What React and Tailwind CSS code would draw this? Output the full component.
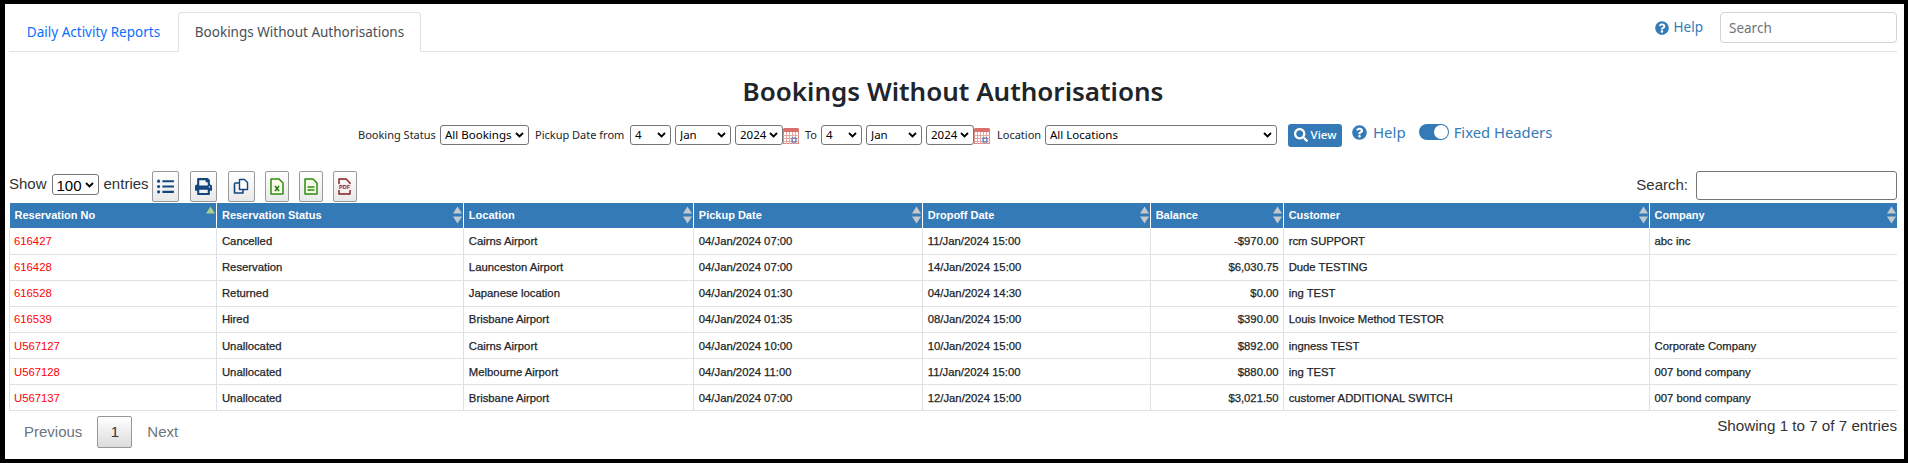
import { FaListUl, FaPrint, FaQuestionCircle, FaSearch } from 'react-icons/fa';

const COLUMNS = [
  { label: 'Reservation No', width: 207 },
  { label: 'Reservation Status', width: 247 },
  { label: 'Location', width: 230 },
  { label: 'Pickup Date', width: 229 },
  { label: 'Dropoff Date', width: 228 },
  { label: 'Balance', width: 133 },
  { label: 'Customer', width: 366 },
  { label: 'Company', width: 248 },
];

const ROWS = [
  ['616427', 'Cancelled', 'Cairns Airport', '04/Jan/2024 07:00', '11/Jan/2024 15:00', '-$970.00', 'rcm SUPPORT', 'abc inc'],
  ['616428', 'Reservation', 'Launceston Airport', '04/Jan/2024 07:00', '14/Jan/2024 15:00', '$6,030.75', 'Dude TESTING', ''],
  ['616528', 'Returned', 'Japanese location', '04/Jan/2024 01:30', '04/Jan/2024 14:30', '$0.00', 'ing TEST', ''],
  ['616539', 'Hired', 'Brisbane Airport', '04/Jan/2024 01:35', '08/Jan/2024 15:00', '$390.00', 'Louis Invoice Method TESTOR', ''],
  ['U567127', 'Unallocated', 'Cairns Airport', '04/Jan/2024 10:00', '10/Jan/2024 15:00', '$892.00', 'ingness TEST', 'Corporate Company'],
  ['U567128', 'Unallocated', 'Melbourne Airport', '04/Jan/2024 11:00', '11/Jan/2024 15:00', '$880.00', 'ing TEST', '007 bond company'],
  ['U567137', 'Unallocated', 'Brisbane Airport', '04/Jan/2024 07:00', '12/Jan/2024 15:00', '$3,021.50', 'customer ADDITIONAL SWITCH', '007 bond company'],
];

function CopyIcon() {
  return (
    <svg width="17" height="17" viewBox="0 0 17 17" fill="none">
      <path d="M6.5 1.5h5l3 3v7h-8z" fill="#fff" stroke="#14477e" strokeWidth="1.4" strokeLinejoin="round" />
      <path d="M6 5H2.5a1 1 0 0 0-1 1v9h8.500v-3" stroke="#14477e" strokeWidth="1.6" strokeLinejoin="round" />
    </svg>
  );
}

function ExcelIcon() {
  return (
    <svg width="14" height="17" viewBox="0 0 14 17" fill="none">
      <path d="M1 1h8l4 4v11H1z" fill="#fffde8" stroke="#2e8b12" strokeWidth="1.5" strokeLinejoin="round" />
      <rect x="3.500" y="7" width="7" height="7" fill="#eaf5d8" />
      <path d="M5 8l4 5M9 8l-4 5" stroke="#1f7a12" strokeWidth="1.400" />
    </svg>
  );
}

function CsvIcon() {
  return (
    <svg width="14" height="17" viewBox="0 0 14 17" fill="none">
      <path d="M1 1h8l4 4v11H1z" fill="#f4fae6" stroke="#2e8b12" strokeWidth="1.5" strokeLinejoin="round" />
      <path d="M3.500 9h7M3.500 12h7" stroke="#2e8b12" strokeWidth="1.500" />
    </svg>
  );
}

function PdfIcon() {
  return (
    <svg width="15" height="17" viewBox="0 0 15 17" fill="none">
      <path d="M2 6V1h7l4 4v1M2 12v4h11v-4" stroke="#8b1a1a" strokeWidth="1.400" strokeLinejoin="round" />
      <rect x="0.500" y="6" width="14" height="6" fill="#fbeaea" />
      <text x="7.500" y="11" textAnchor="middle" fontSize="5.500" fontWeight="700" fontFamily="Liberation Sans, sans-serif" fill="#8b1a1a">PDF</text>
    </svg>
  );
}

const TOOLS = [
  { icon: <FaListUl size={17} className="text-[#14477e]" />, w: 'w-[27px]', mr: 'mr-[11px]' },
  { icon: <FaPrint size={17} className="text-[#14477e]" />, w: 'w-[27px]', mr: 'mr-[11px]' },
  { icon: <CopyIcon />, w: 'w-[27px]', mr: 'mr-[10px]' },
  { icon: <ExcelIcon />, w: 'w-[24px]', mr: 'mr-[10px]' },
  { icon: <CsvIcon />, w: 'w-[24px]', mr: 'mr-[10px]' },
  { icon: <PdfIcon />, w: 'w-[24px]', mr: '' },
];

function Select({ value, className, textClass = 'text-[11.5px] pl-[4px]' }) {
  return (
    <span className={`relative inline-block shrink-0 ${className}`}>
      <select defaultValue={value} className={`block h-full w-full appearance-none rounded-[3px] border border-[#767676] bg-white text-black ${textClass}`}>
        <option>{value}</option>
      </select>
      <svg width="9" height="6" viewBox="0 0 9 6" className="pointer-events-none absolute right-[5px] top-1/2 -mt-[3px]">
        <path d="M1 1l3.500 3.500L8 1" fill="none" stroke="#000" strokeWidth="1.800" />
      </svg>
    </span>
  );
}

function CalendarIcon() {
  return (
    <svg width="16" height="18" viewBox="0 0 16 18" className="mt-[2px] shrink-0">
      <rect x="0.500" y="2.500" width="15" height="14" fill="#fff" stroke="#d98880" />
      <rect x="0.500" y="1" width="15" height="4" fill="#d9706a" />
      <path d="M0 8.500h16M0 11.500h16M0 14.500h16M3.500 5v12M6.500 5v12M9.500 5v12M12.500 5v12" stroke="#e6a8a3" strokeWidth="1" />
      <rect x="9" y="11" width="4" height="4" fill="none" stroke="#3b6fc4" />
    </svg>
  );
}

function SortArrows({ active }) {
  return (
    <svg width="9" height="18" viewBox="0 0 9 18" className="absolute right-[1px] top-[3px]">
      <path d="M4.500 0.500 9 7.500H0z" fill={active ? '#a8d08d' : '#c6c9cc'} />
      {!active && <path d="M4.500 17.500 9 10.500H0z" fill="#c6c9cc" />}
    </svg>
  );
}

export default function App() {
  return (
    <div className="h-[463px] bg-black pb-[4px] pl-[5px] pr-[4px] pt-[4px]">
      <div className="flex h-full flex-col bg-white pl-[4px] pr-[7px] font-['Noto_Sans',sans-serif]">

        {/* Tabs */}
        <div className="flex h-[48px] shrink-0 items-end justify-between border-b border-[#dee2e6]">
          <div className="flex items-end">
            <a className="mb-[-1px] flex h-[39px] w-[169px] items-center justify-center text-[13.500px] text-[#0d6efd]">Daily Activity Reports</a>
            <a className="mb-[-1px] flex h-[40px] w-[243px] items-center justify-center rounded-t-[4px] border border-[#dee2e6] border-b-white bg-white text-[13.500px] text-[#495057]">Bookings Without Authorisations</a>
          </div>
          <div className="mb-[8px] flex items-center">
            <FaQuestionCircle size={14} className="text-[#337ab7]" />
            <span className="ml-[5px] text-[13.500px] text-[#337ab7]">Help</span>
            <input placeholder="Search" className="ml-[17px] h-[31px] w-[177px] rounded-[4px] border border-[#ced4da] px-[8px] text-[13.500px] placeholder:text-[#6c757d]" />
          </div>
        </div>

        {/* Title */}
        <h1 className="mt-[19px] text-center text-[26px] font-semibold leading-[40px] text-[#212529]">Bookings Without Authorisations</h1>

        {/* Filters */}
        <div className="ml-[349px] mt-[12px] flex h-[24px] items-center text-[11px] text-[#212529]">
          <span className="w-[78px]">Booking Status</span>
          <Select value="All Bookings" className="ml-[4px] h-[20px] w-[89px]" />
          <span className="ml-[6px] w-[91px]">Pickup Date from</span>
          <Select value="4" className="ml-[4px] h-[20px] w-[41px]" />
          <Select value="Jan" className="ml-[4px] h-[20px] w-[56px]" />
          <Select value="2024" className="ml-[4px] h-[20px] w-[48px]" />
          <CalendarIcon />
          <span className="ml-[6px] w-[12px]">To</span>
          <Select value="4" className="ml-[4px] h-[20px] w-[41px]" />
          <Select value="Jan" className="ml-[4px] h-[20px] w-[56px]" />
          <Select value="2024" className="ml-[4px] h-[20px] w-[48px]" />
          <CalendarIcon />
          <span className="ml-[7px] w-[44px]">Location</span>
          <Select value="All Locations" className="ml-[4px] h-[20px] w-[232px]" />
          <button className="ml-[11px] flex h-[23px] w-[54px] items-center justify-center rounded-[3px] bg-[#337ab7] text-[11.500px] font-medium text-white">
            <FaSearch size={14} className="mr-[3px]" />View
          </button>
          <FaQuestionCircle size={15} className="mb-[6px] ml-[10px] text-[#337ab7]" />
          <span className="mb-[6px] ml-[6px] text-[15px] text-[#337ab7]">Help</span>
          <span className="mb-[6px] ml-[13px] flex h-[16px] w-[30px] items-center justify-end rounded-full bg-[#337ab7] pr-[1px]">
            <span className="h-[14px] w-[14px] rounded-full bg-white" />
          </span>
          <span className="mb-[6px] ml-[5px] text-[14.800px] text-[#337ab7]">Fixed Headers</span>
        </div>

        {/* Table tools */}
        <div className="mt-[24px] flex h-[32px] items-start justify-between font-['Liberation_Sans',sans-serif] text-[15px] text-[#333]">
          <div className="flex items-start">
            <div className="flex h-[27px] items-center">
              <span>Show</span>
              <Select value="100" className="ml-[5px] h-[21px] w-[47px]" textClass="text-[15px] pl-[4px]" />
              <span className="ml-[5px]">entries</span>
            </div>
            <div className="ml-[3px] flex">
              {TOOLS.map(({ icon, w, mr }, i) => (
                <button key={i} className={`flex h-[31px] items-center justify-center rounded-[2px] border border-[#999] bg-gradient-to-b from-white to-[#e9e9e9] ${w} ${mr}`}>
                  {icon}
                </button>
              ))}
            </div>
          </div>
          <label className="flex items-center">
            Search:
            <input className="ml-[8px] h-[29px] w-[201px] rounded-[3px] border border-[#767676]" />
          </label>
        </div>

        {/* Table */}
        <table className="table-fixed border-collapse font-['Liberation_Sans',sans-serif] text-[11.300px] text-[#212529] [-webkit-text-stroke:0.25px]">
          <colgroup>
            {COLUMNS.map((c) => <col key={c.label} style={{ width: c.width }} />)}
          </colgroup>
          <thead>
            <tr className="h-[25px] bg-[#337ab7]">
              {COLUMNS.map((c, i) => (
                <th key={c.label} className="relative border-r border-white pl-[5px] text-left text-[11px] font-bold text-white [-webkit-text-stroke:0] last:border-r-0">
                  {c.label}
                  <SortArrows active={i === 0} />
                </th>
              ))}
            </tr>
          </thead>
          <tbody>
            {ROWS.map((row) => (
              <tr key={row[0]} className="h-[26.140px] border-b border-[#dee2e6]">
                {row.map((cell, i) => (
                  <td key={i} className={`border-r border-[#dee2e6] px-[5px] pt-[1px] last:border-r-0 first:border-l first:pl-[4px] ${i === 0 ? 'text-[#ff0000] [-webkit-text-stroke:0]' : ''} ${i === 5 ? 'pr-[4px] text-right' : ''}`}>
                    {cell}
                  </td>
                ))}
              </tr>
            ))}
          </tbody>
        </table>

        {/* Footer */}
        <div className="flex items-start justify-between font-['Liberation_Sans',sans-serif] text-[15px]">
          <div className="ml-[15px] mt-[5px] flex items-center text-[#6c757d]">
            <span>Previous</span>
            <span className="mx-[15px] flex h-[32px] w-[35px] items-center justify-center rounded-[2px] border border-[#979797] bg-gradient-to-b from-white to-[#dcdcdc] text-[#333]">1</span>
            <span>Next</span>
          </div>
          <span className="mt-[4px] text-[15.200px] text-[#333]">Showing 1 to 7 of 7 entries</span>
        </div>
      </div>
    </div>
  );
}
